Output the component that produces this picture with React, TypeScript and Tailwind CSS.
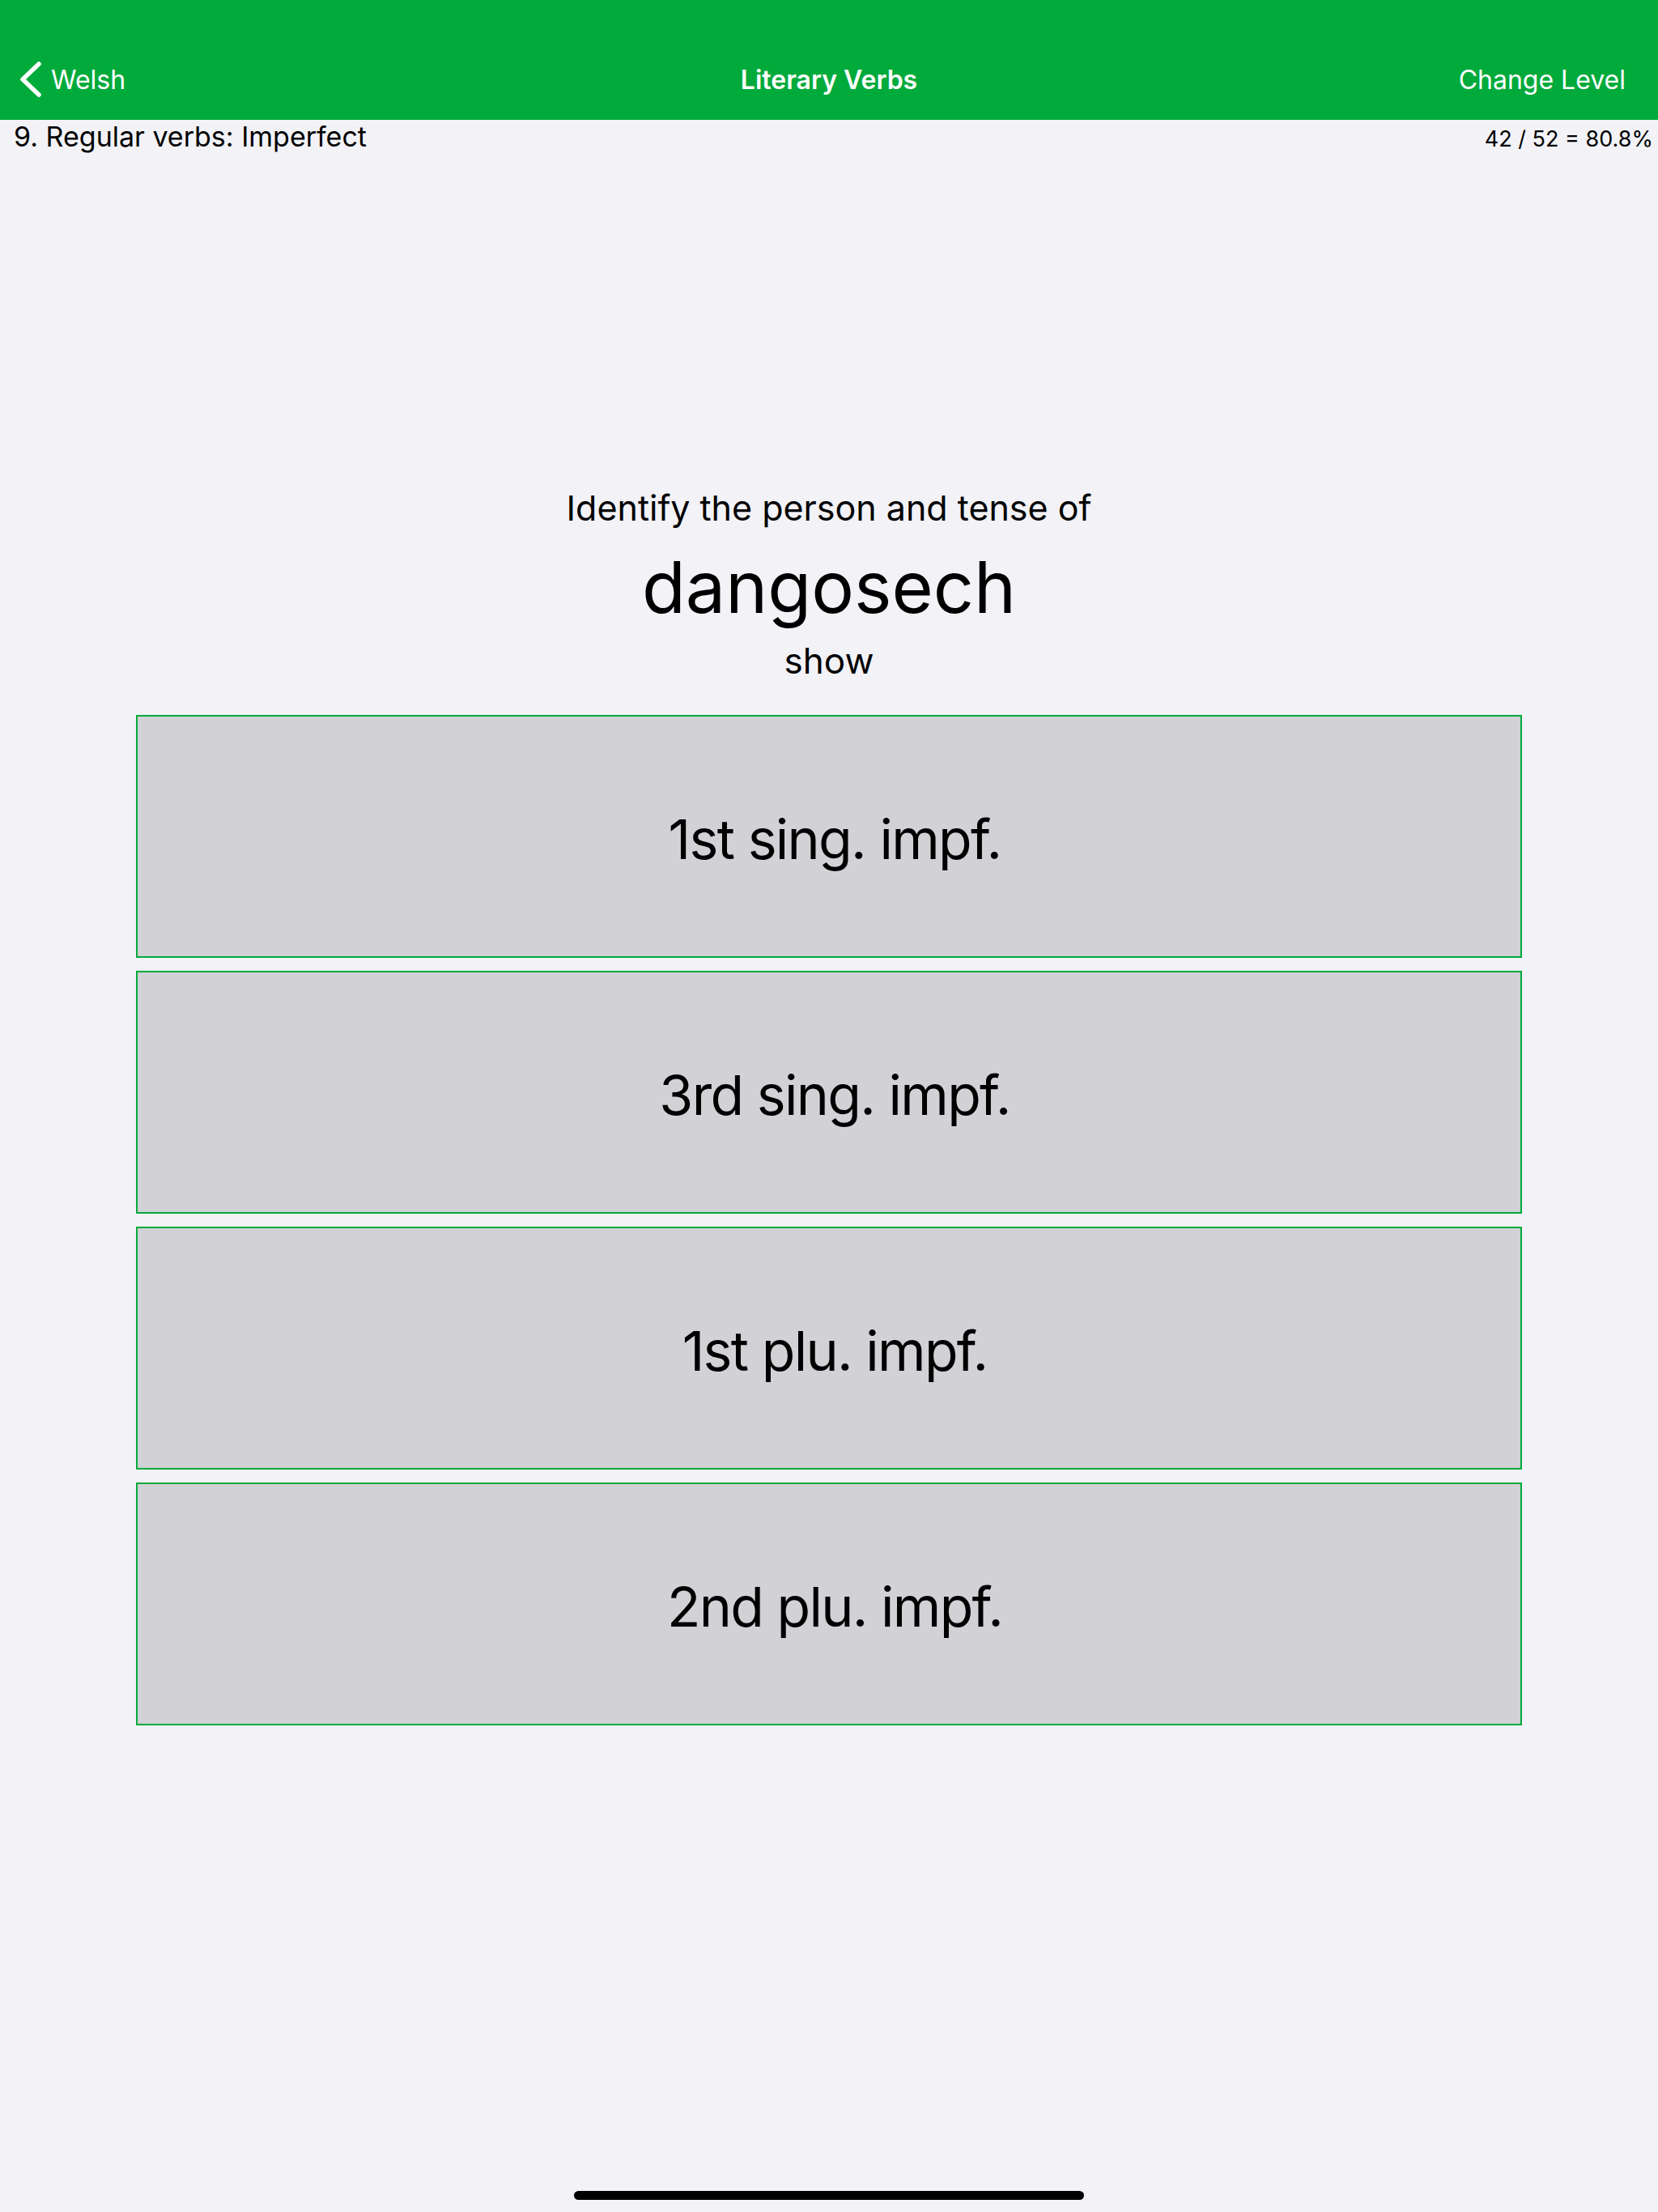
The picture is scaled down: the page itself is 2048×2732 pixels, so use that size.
import React from "react";

const answers = ["1st sing. impf.", "3rd sing. impf.", "1st plu. impf.", "2nd plu. impf."];

export default function App() {
  return (
    <div
      className="h-[2732px] w-[2048px] bg-[#f2f2f7] text-black flex flex-col overflow-hidden"
      style={{ fontFamily: "Inter, 'Noto Sans', sans-serif" }}
    >
      {/* top nav bar */}
      <header className="h-[148px] bg-[#00aa3b] pt-[50px] text-white shrink-0">
        <div className="h-[98px] grid grid-cols-[1fr_auto_1fr] items-center">
          <div className="flex items-center pl-[24px]">
            <svg width="28" height="44" viewBox="0 0 28 44" fill="none" className="-mt-[2px]">
              <path d="M24 3 L4 22 L24 41" stroke="white" strokeWidth="5.5" strokeLinecap="round" strokeLinejoin="round" />
            </svg>
            <span className="ml-[11px] text-[32px] leading-none">Welsh</span>
          </div>
          <div className="text-[32px] leading-none font-semibold">Literary Verbs</div>
          <div className="flex justify-end pr-[40px] text-[32px] leading-none">Change Level</div>
        </div>
      </header>

      {/* level + score */}
      <div className="flex items-baseline justify-between h-[42px] pl-[17px] pr-[6px]">
        <span className="text-[34px] leading-[42px]">9. Regular verbs: Imperfect</span>
        <span className="text-[27px] leading-[42px]">42 / 52 = 80.8%</span>
      </div>

      {/* question */}
      <div className="flex flex-col items-center mt-[411px]">
        <div className="text-[43px] leading-[53px]">Identify the person and tense of</div>
        <div className="text-[88px] leading-[100px] mt-[21px]">dangosech</div>
        <div className="text-[44px] leading-[53px] mt-[15px]">show</div>
      </div>

      {/* answer buttons */}
      <div className="flex flex-col gap-[16px] px-[168px] mt-[40px]">
        {answers.map((a) => (
          <button
            key={a}
            className="h-[300px] w-full bg-[#d1d1d6] border-2 border-[#00aa3b] flex items-center justify-center pl-[14px] pt-[5px] text-[68px] tracking-tight text-black"
          >
            {a}
          </button>
        ))}
      </div>

      {/* home indicator */}
      <div className="mt-auto mb-[15px] flex justify-center">
        <div className="w-[630px] h-[11px] rounded-full bg-black" />
      </div>
    </div>
  );
}
